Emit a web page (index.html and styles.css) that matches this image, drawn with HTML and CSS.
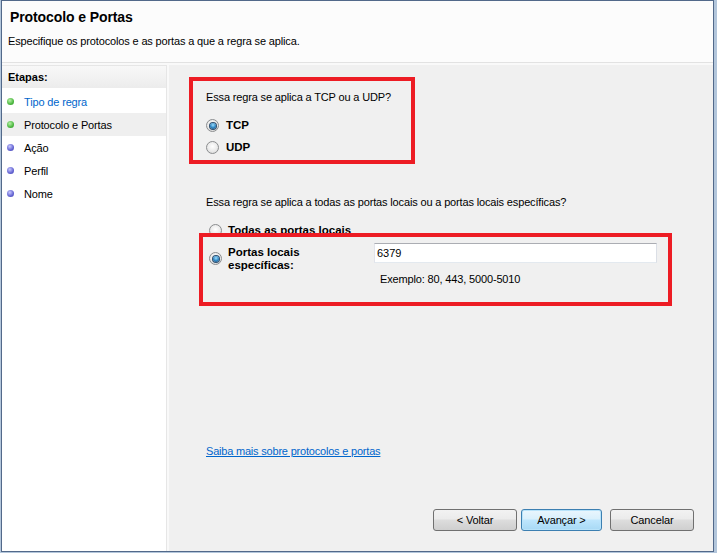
FILE: index.html
```html
<!DOCTYPE html>
<html lang="pt-BR">
<head>
    <meta charset="UTF-8">
    <title>Assistente para Nova Regra de Entrada</title>
    <link rel="stylesheet" href="styles.css">
</head>
<body>
    <div class="wizard-window">
        <div class="wizard-header">
            <h1>Protocolo e Portas</h1>
            <p>Especifique os protocolos e as portas a que a regra se aplica.</p>
        </div>

        <div class="wizard-body">
            <div class="steps">
                <div class="steps-title">Etapas:</div>
                <ul class="steps-list">
                    <li class="step done"><span class="dot green"></span><a href="#">Tipo de regra</a></li>
                    <li class="step current"><span class="dot green"></span>Protocolo e Portas</li>
                    <li class="step"><span class="dot blue"></span>Ação</li>
                    <li class="step"><span class="dot blue"></span>Perfil</li>
                    <li class="step"><span class="dot blue"></span>Nome</li>
                </ul>
            </div>

            <div class="page">
                <p class="question">Essa regra se aplica a TCP ou a UDP?</p>
                <div class="option first"><span class="radio checked"></span><b>TCP</b></div>
                <div class="option second"><span class="radio"></span><b>UDP</b></div>

                <p class="question q-ports">Essa regra se aplica a todas as portas locais ou a portas locais específicas?</p>
                <div class="option all-ports"><span class="radio"></span><b>Todas as portas locais</b></div>

                <div class="port-grid">
                    <span class="radio checked"></span>
                    <b class="port-label">Portas locais<br>específicas:</b>
                    <input class="port-input" type="text" value="6379">
                    <span class="port-hint">Exemplo: 80, 443, 5000-5010</span>
                </div>

                <a class="help-link" href="#">Saiba mais sobre protocolos e portas</a>

                <div class="buttons">
                    <button class="btn back">&lt; Voltar</button>
                    <button class="btn next focused">Avançar &gt;</button>
                    <button class="btn cancel">Cancelar</button>
                </div>
            </div>

            <!-- annotation boxes drawn over the dialog -->
            <div class="mark mark-protocol"></div>
            <div class="mark mark-ports"></div>
        </div>
    </div>
</body>
</html>
```

FILE: styles.css
```css
:root {
    --win-border: #52698a;
    --panel-gray: #f0f0f0;
    --link-blue: #0066cc;
    --mark-red: #ed1c24;
}

* {
    margin: 0;
    padding: 0;
    box-sizing: border-box;
}

body {
    background-color: #b3c6db;
    font-family: "Liberation Sans", Arial, sans-serif;
    font-size: 11px;
    color: #000;
}

b {
    font-size: 11.5px;
}

.wizard-window {
    position: relative;
    width: 713px;
    height: 552px;
    margin-left: 1px;
    border: 1px solid var(--win-border);
    background-color: #fff;
    display: flex;
    flex-direction: column;
}

.wizard-header {
    height: 62px;
    padding: 8px 0 0 6px;
    background-color: #fcfcfc;
    border-bottom: 1px solid #e2e2e2;
}

.wizard-header h1 {
    font-size: 14px;
    line-height: 17px;
    font-weight: bold;
    padding-left: 2px;
    letter-spacing: -0.1px;
}

.wizard-header p {
    margin-top: 9px;
    line-height: 13px;
    letter-spacing: -0.15px;
}

.wizard-body {
    flex: 1;
    display: flex;
    padding-top: 2px;
    background-color: #f9f9f9;
}

.steps {
    width: 165px;
    background-color: #fff;
    border-top: 1px solid #e6e6e6;
    border-right: 1px solid #e6e6e6;
}

.steps-title {
    height: 22px;
    line-height: 22px;
    padding-left: 6px;
    font-weight: bold;
    background: linear-gradient(#f8f8f8, #ececec);
}

.steps-list {
    list-style: none;
    padding-top: 2px;
}

.step {
    height: 23px;
    display: flex;
    align-items: center;
    gap: 10px;
    padding-left: 5px;
    letter-spacing: -0.15px;
}

.step a {
    color: var(--link-blue);
    text-decoration: none;
}

.step.current {
    background-color: #efefef;
}

.dot {
    width: 7px;
    height: 7px;
    border-radius: 50%;
    flex: none;
}

.dot.green {
    background: radial-gradient(circle at 40% 35%, #b9f0a8, #4cb840 60%, #2f8a26);
}

.dot.blue {
    background: radial-gradient(circle at 40% 35%, #c9c9ff, #6363d2 60%, #3c3ca6);
}

.page {
    flex: 1;
    margin-left: 2px;
    background-color: var(--panel-gray);
    padding: 26px 19px 20px 37px;
    display: flex;
    flex-direction: column;
    align-items: flex-start;
}

.question {
    line-height: 13px;
    letter-spacing: -0.15px;
}

.q-ports {
    margin-top: 42px;
}

.option {
    display: flex;
    align-items: center;
    gap: 7px;
    height: 13px;
    line-height: 13px;
}

.option.first {
    margin-top: 15px;
}

.option.second {
    margin-top: 9px;
}

.option.all-ports {
    margin-top: 15px;
    margin-left: 3px;
    gap: 6px;
}

.radio {
    width: 13px;
    height: 13px;
    border-radius: 50%;
    border: 1px solid #8b8d8f;
    background: radial-gradient(circle at 50% 40%, #ffffff, #e8e8e8 60%, #cfcfcf);
    display: grid;
    place-items: center;
    flex: none;
}

.radio.checked::after {
    content: "";
    width: 6px;
    height: 6px;
    border-radius: 50%;
    background: radial-gradient(circle at 50% 35%, #9fe0ff, #2a82c0 55%, #0e3d68);
    box-shadow: 0 0 0 1px #2e4e6e;
}

.port-grid {
    margin-top: 6px;
    margin-left: 3px;
    display: grid;
    grid-template-columns: 13px 152px 283px;
    grid-template-rows: 20px auto;
}

.port-grid .radio {
    grid-row: 1 / 3;
    margin-top: 9px;
}

.port-label {
    grid-row: 1 / 3;
    padding: 3px 0 0 6px;
    line-height: 13px;
}

.port-input {
    height: 20px;
    border: 1px solid #abadb3;
    border-left-color: #e2e3ea;
    border-right-color: #dbdfe6;
    border-bottom-color: #e3e9ef;
    padding: 0 2px;
    font-family: inherit;
    font-size: 11px;
    color: #000;
    background-color: #fff;
}

.port-hint {
    grid-column: 3;
    margin: 10px 0 0 6px;
    line-height: 13px;
    letter-spacing: -0.15px;
}

.help-link {
    margin-top: auto;
    margin-bottom: 51px;
    line-height: 13px;
    color: var(--link-blue);
    letter-spacing: -0.2px;
}

.buttons {
    align-self: stretch;
    display: flex;
    justify-content: flex-end;
}

.btn {
    height: 22px;
    width: 84px;
    border: 1px solid #707070;
    border-radius: 3px;
    background: linear-gradient(#f2f2f2 0%, #ebebeb 45%, #dddddd 50%, #cfcfcf 100%);
    font-family: inherit;
    font-size: 11px;
    color: #000;
    letter-spacing: -0.15px;
}

.btn.next {
    width: 81px;
    margin: 0 8px 0 4px;
}

.btn.focused {
    border-color: #3c7fb1;
    background: linear-gradient(#eaf6fd 0%, #d9f0fc 45%, #bee6fd 50%, #a7d9f5 100%);
    box-shadow: inset 0 0 0 1px #b8e3fa;
}

.mark {
    position: absolute;
    border: 4px solid var(--mark-red);
    pointer-events: none;
}

.mark-protocol {
    left: 187px;
    top: 76px;
    width: 226px;
    height: 87px;
}

.mark-ports {
    left: 197px;
    top: 232px;
    width: 473px;
    height: 73px;
}
```
